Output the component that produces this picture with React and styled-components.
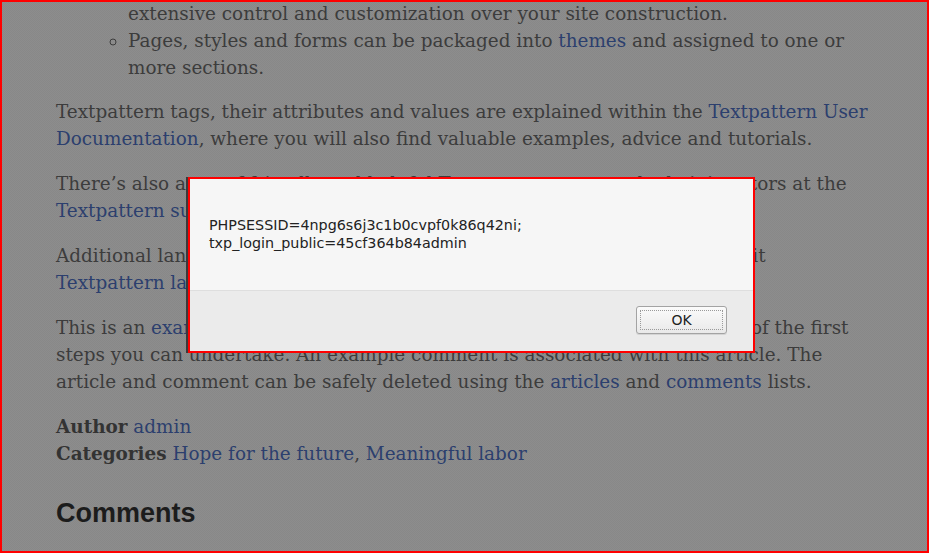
import React from 'react';
import styled, { createGlobalStyle } from 'styled-components';

const GlobalStyle = createGlobalStyle`
  html, body {
    margin: 0;
    padding: 0;
    overflow: hidden;
  }
`;

// Page under the modal, already dimmed
const Frame = styled.div`
  position: relative;
  box-sizing: border-box;
  width: 929px;
  height: 553px;
  border: 2px solid #ff0000;
  overflow: hidden;
  background-color: #8b8b8b;
  background-image: repeating-conic-gradient(#8d8d8d 0 25%, #888888 0 50%);
  background-size: 2px 2px;
`;

const Article = styled.div`
  padding: 0 0 0 54px;
  width: 818px;
  font-family: "DejaVu Serif", "Liberation Serif", serif;
  font-size: 18.4px;
  line-height: 27px;
  color: #3c3c3c;
`;

const List = styled.ul`
  margin: -2px 0 17px;
  padding-left: 72px;
  list-style: circle;
`;

const Item = styled.li`
  list-style: ${props => props.cont ? 'none' : 'circle'};
`;

const Para = styled.p`
  margin: 0 0 18px;
`;

const Link = styled.a`
  color: #2c3f6e;
  text-decoration: none;
`;

const Label = styled.b`
  font-weight: bold;
  color: #333333;
`;

const Heading = styled.h2`
  margin: 30px 0 0;
  font-family: "Liberation Sans", Arial, sans-serif;
  font-size: 27px;
  line-height: 32px;
  font-weight: bold;
  color: #1c1c1c;
`;

// Alert dialog
const Dialog = styled.div`
  position: absolute;
  left: 186px;
  top: 175px;
  width: 563px;
  height: 172px;
  display: flex;
  flex-direction: column;
  border: 2px solid #ff0000;
  background: #f6f6f6;
  box-shadow: -2px 0 0 #3a3a3a;
`;

const Message = styled.div`
  flex: 1;
  padding: 37px 19px 0;
  font-family: "DejaVu Sans", "Noto Sans", sans-serif;
  font-size: 14.3px;
  line-height: 18px;
  color: #222222;
`;

const Footer = styled.div`
  height: 61px;
  display: flex;
  justify-content: flex-end;
  align-items: flex-start;
  padding: 15px 26px 0 0;
  box-sizing: border-box;
  background: #ebebeb;
  border-top: 1px solid #dedede;
`;

const Button = styled.button`
  position: relative;
  width: 91px;
  height: 28px;
  padding: 0;
  border: 1px solid #a3a3a3;
  border-radius: 3px;
  background: linear-gradient(#fbfbfb, #e9e9e9);
  box-shadow: 0 1px 0 #d4d4d4;
  font-family: "DejaVu Sans", "Noto Sans", sans-serif;
  font-size: 14px;
  color: #222222;

  &::after {
    content: '';
    position: absolute;
    inset: 3px;
    border: 1px dotted #9a9a9a;
  }
`;

const App = () => {
  return (
    <Frame>
      <GlobalStyle />
      <Article>
        <List>
          <Item cont>extensive control and customization over your site construction.</Item>
          <Item>Pages, styles and forms can be packaged into <Link>themes</Link> and assigned to one or more sections.</Item>
        </List>
        <Para>
          Textpattern tags, their attributes and values are explained within the <Link>Textpattern User Documentation</Link>, where you will also find valuable examples, advice and tutorials.
        </Para>
        <Para>
          There’s also a set of friendly and helpful Textpattern users and administrators at the <Link>Textpattern support forum</Link>.
        </Para>
        <Para>
          Additional language translations and corrections are welcomed. Please visit <Link>Textpattern language translations</Link> for further details.
        </Para>
        <Para>
          This is an <Link>example article</Link> included with Textpattern to demonstrate some of the first steps you can undertake. An example comment is associated with this article. The article and comment can be safely deleted using the <Link>articles</Link> and <Link>comments</Link> lists.
        </Para>
        <Para>
          <Label>Author</Label> <Link>admin</Link><br />
          <Label>Categories</Label> <Link>Hope for the future</Link>, <Link>Meaningful labor</Link>
        </Para>
        <Heading>Comments</Heading>
      </Article>
      <Dialog>
        <Message>
          PHPSESSID=4npg6s6j3c1b0cvpf0k86q42ni;<br />
          txp_login_public=45cf364b84admin
        </Message>
        <Footer>
          <Button>OK</Button>
        </Footer>
      </Dialog>
    </Frame>
  );
};

export default App;
